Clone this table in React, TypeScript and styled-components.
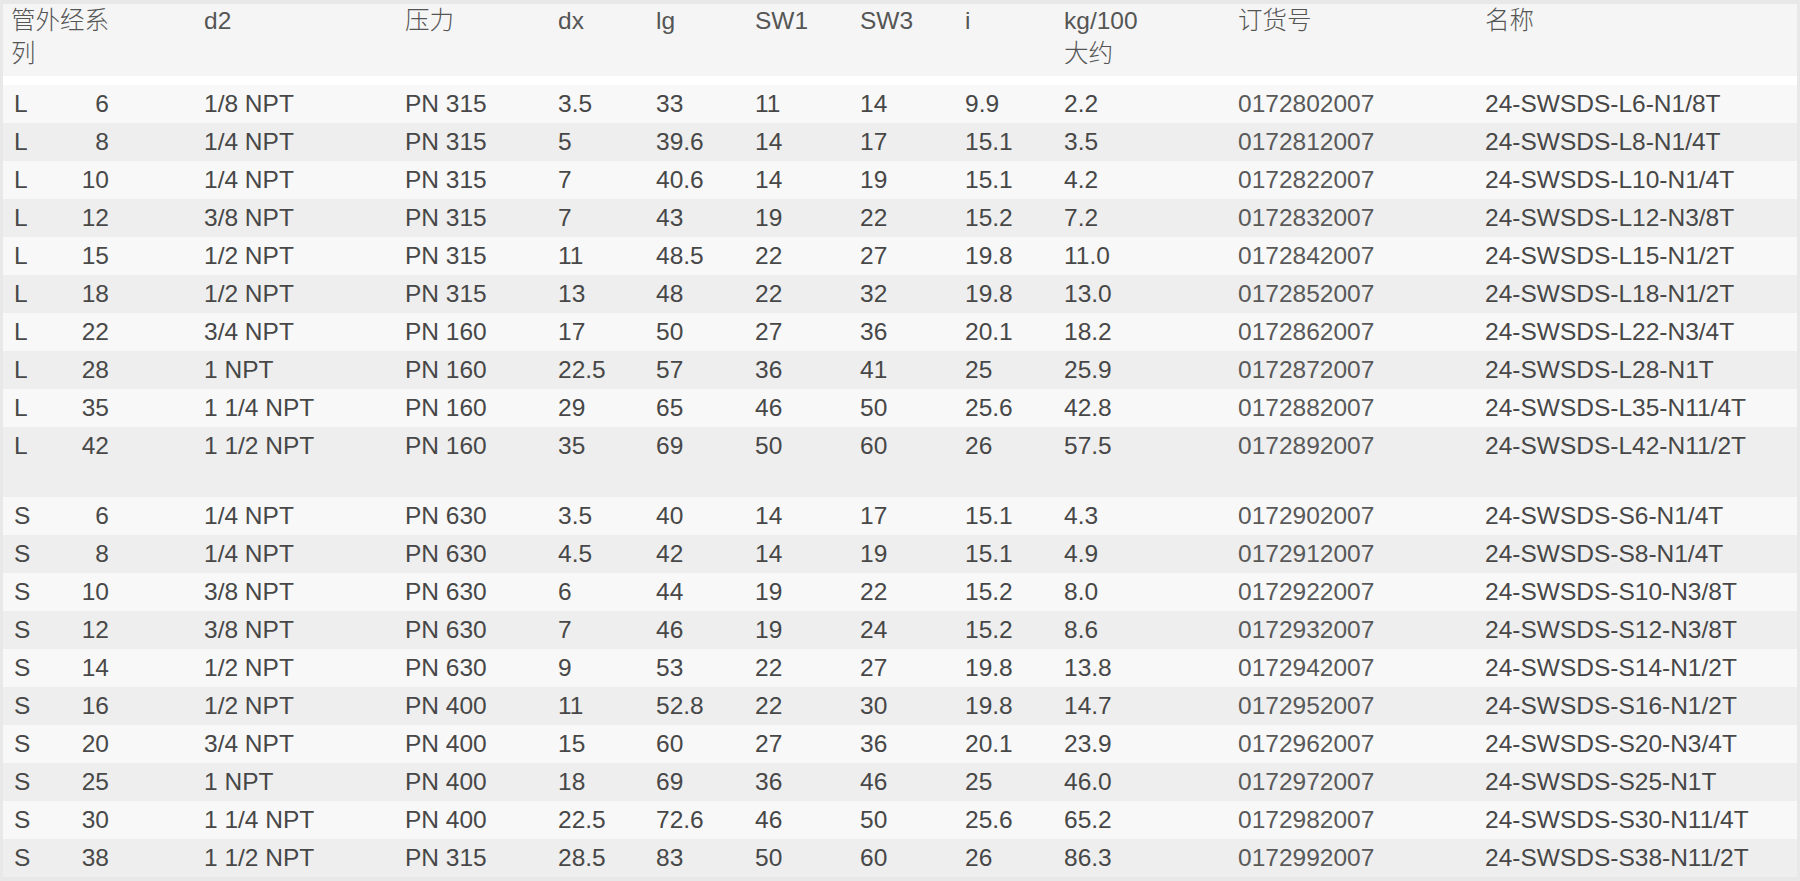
import React from "react";
import styled, { createGlobalStyle } from "styled-components";

const GlobalStyle = createGlobalStyle`
  html, body {
    margin: 0;
    padding: 0;
    background: #e8e8e8;
  }
  body {
    font-family: "Liberation Sans", Arial, "Noto Sans CJK SC", sans-serif;
    font-weight: 400;
    color: #484848;
  }
`;

const COLS = "193px 201px 153px 98px 99px 105px 105px 99px 174px 247px 1fr";

const Sheet = styled.div`
  padding: 4px 3px 4px 3px;
  width: 1800px;
  height: 881px;
  box-sizing: border-box;
  overflow: hidden;
`;

const HeaderRow = styled.div`
  display: grid;
  grid-template-columns: ${COLS};
  background: #f5f5f5;
  padding: 0 0 6px 8px;
  height: 72px;
  box-sizing: border-box;
  font-size: 24.5px;
  line-height: 33px;
  color: #555555;
  font-family: "Liberation Sans", "Noto Sans CJK SC", sans-serif;
`;

const HeadCell = styled.div<{ $wrap?: number }>`
  max-width: ${(p) => (p.$wrap ? `${p.$wrap}px` : "none")};
  font-weight: 300;
`;

const Band = styled.div`
  height: 9px;
  background: #ffffff;
`;

const Row = styled.div<{ $shade: boolean }>`
  display: grid;
  grid-template-columns: ${COLS};
  align-items: center;
  height: 38px;
  padding-left: 8px;
  background: ${(p) => (p.$shade ? "#eeeeee" : "#f8f8f8")};
  font-size: 24.5px;
  line-height: 38px;
  white-space: nowrap;
`;

const Spacer = styled.div`
  height: 32px;
  background: #eeeeee;
`;

const SizeCell = styled.div`
  display: flex;
  justify-content: space-between;
  width: 98px;
  padding-left: 3px;
  box-sizing: border-box;
`;

const Cell = styled.div<{ $muted?: boolean }>`
  color: ${(p) => (p.$muted ? "#595959" : "#474747")};
`;

type Item = [string, string, string, string, string, string, string, string, string, string, string];

const L: Item[] = [
  ["L", "6", "1/8 NPT", "PN 315", "3.5", "33", "11", "14", "9.9", "2.2", "0172802007"],
  ["L", "8", "1/4 NPT", "PN 315", "5", "39.6", "14", "17", "15.1", "3.5", "0172812007"],
  ["L", "10", "1/4 NPT", "PN 315", "7", "40.6", "14", "19", "15.1", "4.2", "0172822007"],
  ["L", "12", "3/8 NPT", "PN 315", "7", "43", "19", "22", "15.2", "7.2", "0172832007"],
  ["L", "15", "1/2 NPT", "PN 315", "11", "48.5", "22", "27", "19.8", "11.0", "0172842007"],
  ["L", "18", "1/2 NPT", "PN 315", "13", "48", "22", "32", "19.8", "13.0", "0172852007"],
  ["L", "22", "3/4 NPT", "PN 160", "17", "50", "27", "36", "20.1", "18.2", "0172862007"],
  ["L", "28", "1 NPT", "PN 160", "22.5", "57", "36", "41", "25", "25.9", "0172872007"],
  ["L", "35", "1 1/4 NPT", "PN 160", "29", "65", "46", "50", "25.6", "42.8", "0172882007"],
  ["L", "42", "1 1/2 NPT", "PN 160", "35", "69", "50", "60", "26", "57.5", "0172892007"],
];
const LNames = [
  "24-SWSDS-L6-N1/8T",
  "24-SWSDS-L8-N1/4T",
  "24-SWSDS-L10-N1/4T",
  "24-SWSDS-L12-N3/8T",
  "24-SWSDS-L15-N1/2T",
  "24-SWSDS-L18-N1/2T",
  "24-SWSDS-L22-N3/4T",
  "24-SWSDS-L28-N1T",
  "24-SWSDS-L35-N11/4T",
  "24-SWSDS-L42-N11/2T",
];

const S: Item[] = [
  ["S", "6", "1/4 NPT", "PN 630", "3.5", "40", "14", "17", "15.1", "4.3", "0172902007"],
  ["S", "8", "1/4 NPT", "PN 630", "4.5", "42", "14", "19", "15.1", "4.9", "0172912007"],
  ["S", "10", "3/8 NPT", "PN 630", "6", "44", "19", "22", "15.2", "8.0", "0172922007"],
  ["S", "12", "3/8 NPT", "PN 630", "7", "46", "19", "24", "15.2", "8.6", "0172932007"],
  ["S", "14", "1/2 NPT", "PN 630", "9", "53", "22", "27", "19.8", "13.8", "0172942007"],
  ["S", "16", "1/2 NPT", "PN 400", "11", "52.8", "22", "30", "19.8", "14.7", "0172952007"],
  ["S", "20", "3/4 NPT", "PN 400", "15", "60", "27", "36", "20.1", "23.9", "0172962007"],
  ["S", "25", "1 NPT", "PN 400", "18", "69", "36", "46", "25", "46.0", "0172972007"],
  ["S", "30", "1 1/4 NPT", "PN 400", "22.5", "72.6", "46", "50", "25.6", "65.2", "0172982007"],
  ["S", "38", "1 1/2 NPT", "PN 315", "28.5", "83", "50", "60", "26", "86.3", "0172992007"],
];
const SNames = [
  "24-SWSDS-S6-N1/4T",
  "24-SWSDS-S8-N1/4T",
  "24-SWSDS-S10-N3/8T",
  "24-SWSDS-S12-N3/8T",
  "24-SWSDS-S14-N1/2T",
  "24-SWSDS-S16-N1/2T",
  "24-SWSDS-S20-N3/4T",
  "24-SWSDS-S25-N1T",
  "24-SWSDS-S30-N11/4T",
  "24-SWSDS-S38-N11/2T",
];

function Group({ items, names }: { items: Item[]; names: string[] }) {
  return (
    <>
      {items.map((it, i) => (
        <Row key={it[10]} $shade={i % 2 === 1}>
          <SizeCell>
            <span>{it[0]}</span>
            <span>{it[1]}</span>
          </SizeCell>
          <Cell>{it[2]}</Cell>
          <Cell>{it[3]}</Cell>
          <Cell>{it[4]}</Cell>
          <Cell>{it[5]}</Cell>
          <Cell>{it[6]}</Cell>
          <Cell>{it[7]}</Cell>
          <Cell>{it[8]}</Cell>
          <Cell>{it[9]}</Cell>
          <Cell $muted>{it[10]}</Cell>
          <Cell>{names[i]}</Cell>
        </Row>
      ))}
    </>
  );
}

export default function App() {
  return (
    <>
      <GlobalStyle />
      <Sheet>
        <HeaderRow>
          <HeadCell $wrap={100}>管外经系列</HeadCell>
          <HeadCell>d2</HeadCell>
          <HeadCell>压力</HeadCell>
          <HeadCell>dx</HeadCell>
          <HeadCell>lg</HeadCell>
          <HeadCell>SW1</HeadCell>
          <HeadCell>SW3</HeadCell>
          <HeadCell>i</HeadCell>
          <HeadCell>
            kg/100
            <br />
            大约
          </HeadCell>
          <HeadCell>订货号</HeadCell>
          <HeadCell>名称</HeadCell>
        </HeaderRow>
        <Band />
        <Group items={L} names={LNames} />
        <Spacer />
        <Group items={S} names={SNames} />
      </Sheet>
    </>
  );
}
